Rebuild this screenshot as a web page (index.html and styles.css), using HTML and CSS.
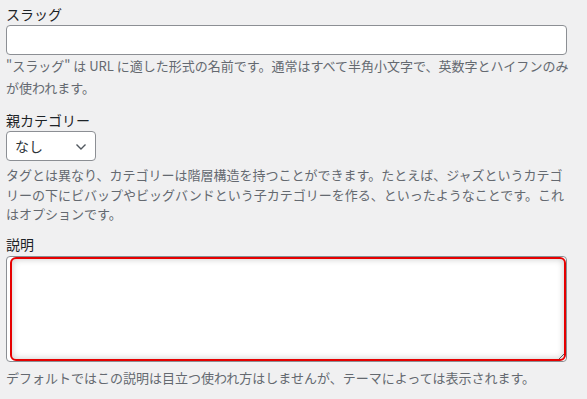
FILE: index.html
```html
<!DOCTYPE html>
<html lang="ja">
<head>
<meta charset="utf-8">
<link rel="stylesheet" href="styles.css">
</head>
<body>
<div class="form">
  <div class="field field-slug">
    <label class="label">スラッグ</label>
    <input class="text-input" type="text">
    <p class="desc desc-slug">"スラッグ" は URL に適した形式の名前です。通常はすべて半角小文字で、英数字とハイフンのみが使われます。</p>
  </div>
  <div class="field field-parent">
    <label class="label">親カテゴリー</label>
    <div class="select">
      <span class="select-value">なし</span>
      <svg class="chevron" width="12" height="8" viewBox="0 0 12 8"><path d="M1.5 1.5 L6 6 L10.5 1.5" fill="none" stroke="#50575e" stroke-width="1.4"/></svg>
    </div>
    <p class="desc desc-parent">タグとは異なり、カテゴリーは階層構造を持つことができます。たとえば、ジャズというカテゴリーの下にビバップやビッグバンドという子カテゴリーを作る、といったようなことです。これはオプションです。</p>
  </div>
  <div class="field field-desc">
    <label class="label">説明</label>
    <div class="textarea-wrap">
      <textarea class="textarea"></textarea>
      <div class="highlight"></div>
    </div>
    <p class="desc desc-desc">デフォルトではこの説明は目立つ使われ方はしませんが、テーマによっては表示されます。</p>
  </div>
</div>
</body>
</html>
```

FILE: styles.css
```css
html, body {
  margin: 0;
  padding: 0;
  background: #f0f0f1;
}
body {
  font-family: "Noto Sans CJK JP", "Noto Sans", sans-serif;
  color: #1d2327;
}
.form {
  width: 561px;
  padding: 4px 0 0 6px;
}
.field {
  display: flex;
  flex-direction: column;
}
.label {
  font-size: 14px;
  line-height: 20px;
  height: 20px;
  color: #1d2327;
}
.text-input {
  box-sizing: border-box;
  width: 561px;
  height: 30px;
  margin: 1px 0 0 0;
  border: 1px solid #8c8f94;
  border-radius: 4px;
  background: #fff;
  padding: 0 8px;
  outline: none;
}
.desc {
  margin: 0;
  font-size: 13px;
  color: #646970;
}
.desc-slug {
  width: 572px;
  line-height: 22px;
}
.field-parent {
  margin-top: 11px;
}
.select {
  box-sizing: border-box;
  width: 90px;
  height: 30px;
  margin-top: 1px;
  border: 1px solid #8c8f94;
  border-radius: 4px;
  background: #fff;
  display: flex;
  align-items: center;
  justify-content: space-between;
  padding: 0 8px 0 8px;
}
.select-value {
  font-size: 14px;
  color: #2c3338;
}
.chevron {
  display: block;
  margin-top: 1px;
}
.desc-parent {
  margin-top: 4px;
  line-height: 19.5px;
}
.field-desc {
  margin-top: 10px;
}
.textarea-wrap {
  position: relative;
  margin-top: 2px;
  width: 561px;
  height: 106px;
}
.textarea {
  box-sizing: border-box;
  display: block;
  width: 561px;
  height: 106px;
  margin: 0;
  border: 1px solid #8c8f94;
  border-radius: 4px;
  background: #fff;
  resize: vertical;
  outline: none;
}
.highlight {
  position: absolute;
  left: 4px;
  top: 1px;
  width: 556px;
  height: 104px;
  box-sizing: border-box;
  border: 2px solid #e60000;
  border-radius: 6px;
  box-shadow: inset 0 0 7px rgba(0, 0, 0, 0.22);
  pointer-events: none;
}
.desc-desc {
  margin-top: 6px;
  line-height: 20px;
}
```
